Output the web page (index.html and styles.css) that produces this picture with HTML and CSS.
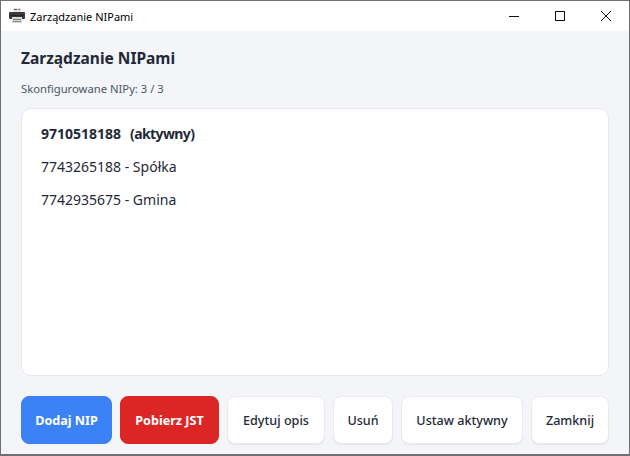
FILE: index.html
```html
<!DOCTYPE html>
<html lang="pl">
<head>
<meta charset="utf-8">
<title>Zarządzanie NIPami</title>
<link rel="stylesheet" href="styles.css">
</head>
<body>
<div class="window">
  <header class="titlebar">
    <svg class="app-icon" width="16" height="16" viewBox="0 0 16 16">
      <rect x="4" y="0" width="8" height="4" fill="#e4e4e4"/>
      <rect x="5" y="1" width="3" height="1" fill="#555"/>
      <rect x="9" y="1" width="2" height="1" fill="#b55"/>
      <rect x="0" y="4" width="16" height="7" rx="1" fill="#3a3a3a"/>
      <rect x="1" y="7" width="14" height="1" fill="#222"/>
      <rect x="3" y="9" width="10" height="6" fill="#d8d8d8"/>
      <rect x="4" y="11" width="8" height="1" fill="#777"/>
      <rect x="4" y="13" width="8" height="1" fill="#888"/>
    </svg>
    <span class="title">Zarządzanie NIPami</span>
    <div class="controls">
      <span class="ctl"><svg width="10" height="10" viewBox="0 0 10 10"><path d="M0 5.5H10" stroke="#111" fill="none"/></svg></span>
      <span class="ctl"><svg width="10" height="10" viewBox="0 0 10 10"><rect x=".5" y=".5" width="9" height="9" stroke="#111" fill="none"/></svg></span>
      <span class="ctl"><svg width="10" height="10" viewBox="0 0 10 10"><path d="M0 0L10 10M10 0L0 10" stroke="#111" stroke-width="1" fill="none"/></svg></span>
    </div>
  </header>
  <main class="content">
    <h1 class="heading">Zarządzanie NIPami</h1>
    <p class="status">Skonfigurowane NIPy: 3 / 3</p>
    <ul class="list">
      <li class="item active"><span class="nip">9710518188</span><span class="flag">(aktywny)</span></li>
      <li class="item">7743265188 - Spółka</li>
      <li class="item">7742935675 - Gmina</li>
    </ul>
    <div class="actions">
      <button class="btn primary w-add">Dodaj NIP</button>
      <button class="btn danger w-jst">Pobierz JST</button>
      <button class="btn w-edit">Edytuj opis</button>
      <button class="btn w-del">Usuń</button>
      <button class="btn w-set">Ustaw aktywny</button>
      <button class="btn w-close">Zamknij</button>
    </div>
  </main>
</div>
</body>
</html>
```
FILE: styles.css
```css
* { box-sizing: border-box; }
html, body { margin: 0; height: 100%; }
body { font-family: "Noto Sans", "Open Sans", sans-serif; color: #1f2937; overflow: hidden; }
.window {
  width: 630px; height: 456px;
  display: flex; flex-direction: column;
  border: 1px solid #6f6f6f;
  border-bottom-width: 2px;
  background: #f3f5f9;
}
.titlebar {
  height: 30px; flex: none;
  display: flex; align-items: center;
  background: #fff;
  padding-left: 8px;
}
.app-icon { flex: none; margin-right: 5px; }
.title { font-size: 11px; color: #000; }
.controls { margin-left: auto; display: flex; }
.ctl { width: 46px; height: 30px; display: flex; align-items: center; justify-content: center; }
.content {
  flex: 1; min-height: 0;
  display: flex; flex-direction: column;
  padding: 17px 20px 10px;
}
.heading { margin: 0; font-size: 15.5px; line-height: 20px; font-weight: 700; color: #1f2937; }
.status { margin: 13px 0 11px; font-size: 11.25px; line-height: 16px; color: #4b5563; }
.list {
  flex: 1; list-style: none; margin: 0;
  padding: 8px 19px;
  background: #fff;
  border: 1px solid #e5e7eb;
  border-radius: 10px;
}
.item { font-size: 14px; line-height: 33px; color: #1f2937; }
.item.active { font-weight: 700; }
.flag { margin-left: 9px; letter-spacing: -.6px; }
.actions { display: flex; gap: 8px; margin-top: 20px; }
.btn {
  height: 48px; padding: 0;
  white-space: nowrap;
  font: 500 12.6px "Noto Sans", sans-serif;
  color: #1f2937;
  background: #fff;
  border: 1px solid #e8eaf0;
  border-radius: 8px;
  box-shadow: 0 1px 0 #e5e7eb;
}
.btn.primary { background: #3b82f6; border-color: #3b82f6; color: #fff; font-weight: 700; box-shadow: none; }
.btn.danger { background: #dc2626; border-color: #dc2626; color: #fff; font-weight: 700; box-shadow: none; }
.w-add { width: 91px; }
.w-jst { width: 99px; }
.w-edit { width: 98px; }
.w-del { width: 60px; }
.w-set { width: 122px; }
.w-close { width: 78px; }
```
